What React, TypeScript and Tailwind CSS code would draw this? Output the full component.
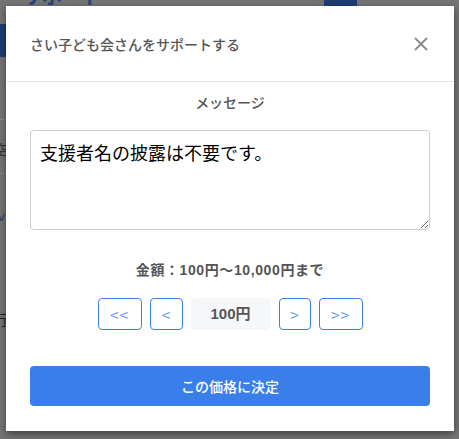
import React from "react";

export default function App() {
  const jp = { fontFamily: '"Noto Sans CJK JP", "Noto Sans", sans-serif' };
  const mixed = { fontFamily: '"Liberation Sans", "Noto Sans CJK JP", sans-serif' };
  return (
    <div className="relative w-[459px] h-[439px] overflow-hidden bg-[#757575]" style={jp}>
      {/* dimmed page behind the overlay */}
      <div className="absolute left-[22px] top-[-14px] text-[20px] font-bold text-[#24457e] leading-[20px]">サポート</div>
      <div className="absolute left-[324px] top-0 w-[33px] h-[8px] bg-[#1e3d74]" />
      <div className="absolute left-0 top-[24px] w-[8px] h-[33px] bg-[#1e3d74]" />
      <div className="absolute left-0 top-[119px] w-[8px] h-px bg-[#8a8a8a]" />
      <div className="absolute left-0 top-[173px] w-[8px] h-px bg-[#8a8a8a]" />
      <div className="absolute left-[-6px] top-[139px] text-[14px] text-[#333]">空</div>
      <div className="absolute left-[-2px] top-[206px] text-[13px] text-[#2a3f66]">v</div>
      <div className="absolute left-[-6px] top-[309px] text-[14px] text-[#222]">行</div>

      {/* modal */}
      <div className="absolute left-[6px] top-[6px] w-[448px] h-[425px] bg-white shadow-[0_3px_8px_rgba(0,0,0,0.45)] flex flex-col">
        <div className="h-[76px] px-6 flex items-center justify-between border-b border-[#e6e6e6]">
          <div className="text-[14px] font-medium text-[#555] leading-5">さい子ども会さんをサポートする</div>
          <svg width="16" height="16" viewBox="0 0 16 16" className="mr-[1px]">
            <path d="M2 2 L14 14 M14 2 L2 14" stroke="#8a8a8a" strokeWidth="1.8" />
          </svg>
        </div>
        <div className="flex flex-col px-6 pt-[10px]">
          <div className="text-center text-[14px] font-medium text-[#555] leading-5">メッセージ</div>
          <textarea
            className="mt-[18px] w-[400px] h-[100px] border border-[#cccccc] rounded-[4px] px-[9px] pt-[8px] text-[18px] leading-[26px] text-black resize-y outline-none"
            style={jp}
            defaultValue="支援者名の披露は不要です。"
          />
          <div className="mt-[30px] text-center text-[14px] font-bold text-[#555] leading-5 tracking-[0.6px]" style={mixed}>
            金額：100円〜10,000円まで
          </div>
          <div className="mt-[18px] flex justify-center gap-2">
            <button className="w-[44px] h-[32px] border border-[#3b7fe8] rounded-[4px] text-[#3b7fe8] text-[16px] font-light flex items-center justify-center tracking-[1px]">&lt;&lt;</button>
            <button className="w-[33px] h-[32px] border border-[#3b7fe8] rounded-[4px] text-[#3b7fe8] text-[16px] font-light flex items-center justify-center">&lt;</button>
            <div className="w-[80px] h-[32px] bg-[#f6f7f9] rounded-[4px] text-[#555] text-[15px] font-bold flex items-center justify-center" style={mixed}>100円</div>
            <button className="w-[32px] h-[32px] border border-[#3b7fe8] rounded-[4px] text-[#3b7fe8] text-[16px] font-light flex items-center justify-center">&gt;</button>
            <button className="w-[44px] h-[32px] border border-[#3b7fe8] rounded-[4px] text-[#3b7fe8] text-[16px] font-light flex items-center justify-center tracking-[1px]">&gt;&gt;</button>
          </div>
          <button className="mt-[36px] w-[400px] h-[40px] bg-[#3a7fe9] rounded-[4px] text-white text-[14px] font-medium flex items-center justify-center">
            この価格に決定
          </button>
        </div>
      </div>
    </div>
  );
}
